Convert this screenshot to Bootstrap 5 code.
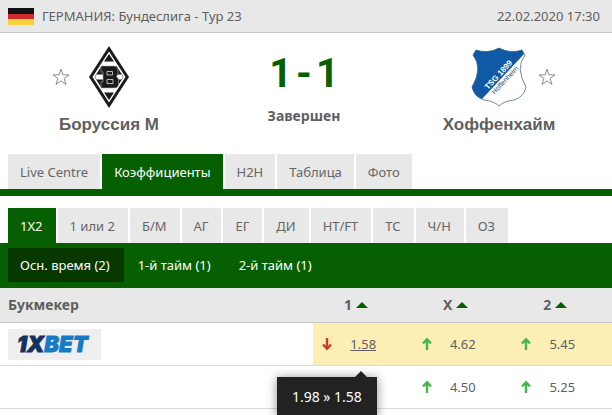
<!DOCTYPE html>
<html lang="ru">
<head>
<meta charset="utf-8">
<meta name="viewport" content="width=device-width, initial-scale=1">
<title>Боруссия М - Хоффенхайм</title>
<link rel="stylesheet" href="https://cdn.jsdelivr.net/npm/bootstrap@5.3.0/dist/css/bootstrap.min.css">
<style>
  :root { --green: #065f00; --grey: #e8e8e8; --ink: #5f5f5f; }
  body { font-family: "Noto Sans", Tahoma, sans-serif; font-size: 13px; line-height: 20px; color: var(--ink); background: #fff; min-height: 100vh; overflow: hidden; }
  .match-head { background: var(--grey); border-bottom: 1px solid #c8c8c8; padding: 6px 12px 6px 8px; }
  .scoreboard { padding: 12px 4px 0 0; height: 121px; }
  .score-box { width: 172px; }
  .score { font: bold 40px/52px Roboto, Arial, sans-serif; color: var(--green); gap: 4px; padding-top: 3px; }
  .status { padding-top: 6px; }
  .status, .odds th, .sort { font-size: 14px; font-weight: bold; }
  .crest-row { display: grid; grid-template-columns: 1fr 56px 1fr; column-gap: 11px; height: 64px; align-items: center; justify-items: center; }
  .star { grid-row: 1; border: 0; padding: 0; background: none; line-height: 0; }
  .star-left { grid-column: 1; justify-self: end; }
  .star-right { grid-column: 3; justify-self: start; }
  .crest { grid-row: 1; grid-column: 2; }
  .team-name { font: bold 17px/24px "Liberation Sans", Arial, sans-serif; margin: 4px 0 0; text-align: center; }
  .tabs { gap: 2px; padding-left: 8px; }
  .tabs button { border: 0; background: var(--grey); color: #666; height: 35px; padding: 0 12px; white-space: nowrap; }
  .bet-tabs button { padding-right: 13px; }
  .tabs button.active, .periods button { background: var(--green); color: #fff; }
  .main-tabs { border-bottom: 7px solid var(--green); margin-bottom: 12px; }
  .periods { background: var(--green); padding: 5px 8px 6px; gap: 2px; }
  .periods button { border: 0; height: 34px; padding: 0 14px 0 12px; }
  .periods button.active { background: #073800; }
  .odds { table-layout: fixed; width: 100%; border-collapse: separate; border-spacing: 0; }
  .odds th, .odds td { padding: 0; height: 43px; border: 0 solid #dcdcdc; border-bottom-width: 1px; }
  .odds thead th { height: 35px; background: var(--grey); border-color: #c8c8c8; }
  .odds th:first-child, .odds td:first-child { padding-left: 8px; }
  .maker-col { width: 51.2%; }
  .sort { border: 0; background: none; padding: 0 14px 0 0; color: inherit; gap: 4px; }
  .odds td.best { background: #fceeb4; }
  .odd { gap: 17px; padding-left: 8px; }
  .odd a { color: inherit; }
  .bookmaker { display: inline-block; vertical-align: middle; background: #efefef; line-height: 0; }
  .move-tip { position: absolute; z-index: 2; top: 54px; right: 36px; height: 40px; width: 100px; line-height: 40px; font-size: 14px; background: #222; color: #fff; text-align: center; box-shadow: 0 1px 10px rgba(0,0,0,.45); }
  .move-tip::before { content: ""; position: absolute; right: 10px; bottom: 100%; border: 6px solid transparent; border-top: 0; border-bottom-color: #222; }
</style>
</head>
<body>
<svg class="d-none" aria-hidden="true">
  <symbol id="star" viewBox="0 0 18 18"><path d="M9 1.2 10.9 6.9H17L12.1 10.5 14 16.4 9 12.8 4 16.4 5.9 10.5 1 6.9H7.1Z" fill="#fff" stroke="#8c8c8c"/></symbol>
  <symbol id="up" viewBox="0 0 10 14"><path d="M5 2V13M1 6.5 5 2.2 9 6.5" fill="none" stroke="#45b649" stroke-width="2.4"/></symbol>
  <symbol id="down" viewBox="0 0 10 14"><path d="M5 1V12M1 7.5 5 11.8 9 7.5" fill="none" stroke="#cf3a25" stroke-width="2.4"/></symbol>
  <symbol id="sort" viewBox="0 0 12 6"><path d="M0 6 6 0 12 6Z" fill="#065f00"/></symbol>
</svg>

<header class="match-head d-flex align-items-center">
  <svg width="26" height="17" class="me-2" role="img" aria-label="Германия"><path fill="#111" d="M0 0H26V6H0Z"/><path fill="#d22d2b" d="M0 6H26V11H0Z"/><path fill="#fbd03c" d="M0 11H26V17H0Z"/></svg>
  <span>ГЕРМАНИЯ: Бундеслига - Тур 23</span>
  <time class="ms-auto" datetime="2020-02-22T17:30">22.02.2020 17:30</time>
</header>

<main>
  <section class="scoreboard d-flex">
    <div class="flex-fill w-50">
      <div class="crest-row">
        <button class="star star-left" type="button" aria-label="В избранное: Боруссия М"><svg width="18" height="18"><use href="#star"/></svg></button>
        <svg class="crest" width="40" height="62" viewBox="0 0 40 62">
          <path d="M20 0 40 31 20 62 0 31Z" fill="#1b1b1b"/>
          <path d="M20 5.5 36.5 31 20 56.5 3.5 31Z" fill="#fff"/>
          <path d="M20 8 25 15.500H15ZM12.500 20H27.500L34.500 31 27.500 42H12.500L5.500 31ZM15 46.500H25L20 54Z" fill="#1b1b1b"/>
          <path d="M7.500 28.500H32.500L34 31 32.500 33.500H7.500L6 31Z" fill="#fff"/>
          <path d="M12 20H25Q29 20 29 24V28L27.500 30.500 29.500 33V38Q29.500 42 25 42H12V36H14V26H12Z" fill="#1b1b1b" stroke="#aaa" stroke-width=".6"/>
          <path d="M18 25.500H23.500V29H18ZM18 33.500H24V37.500H18Z" fill="#1b1b1b" stroke="#ddd" stroke-width=".8"/>
        </svg>
      </div>
      <h2 class="team-name">Боруссия М</h2>
    </div>
    <div class="score-box flex-shrink-0 text-center">
      <div class="score d-flex justify-content-center"><span>1</span><span>-</span><span>1</span></div>
      <div class="status">Завершен</div>
    </div>
    <div class="flex-fill w-50">
      <div class="crest-row">
        <svg class="crest" width="56" height="60" viewBox="0 0 56 60">
          <path d="M5 3Q17 7 28 1 39 7 51 3L54 8Q44 21 55 40 53 50 43 53 33 54 28 59 23 54 13 53 3 50 1 40 12 21 2 8Z" fill="#fff" stroke="#536b8c" stroke-width=".8"/>
          <path d="M5 3Q17 7 28 1 39 7 51 3L53 7 11 52Q3 49 1 40 12 21 2 8Z" fill="#0f59a5"/>
          <g transform="translate(17 43) rotate(-47)" font-family="Liberation Sans, Arial, sans-serif"><text font-size="8" font-weight="bold" fill="#fff">TSG 1899</text><text x="1" y="8" font-size="7" fill="#244d80">Hoffenheim</text></g>
        </svg>
        <button class="star star-right" type="button" aria-label="В избранное: Хоффенхайм"><svg width="18" height="18"><use href="#star"/></svg></button>
      </div>
      <h2 class="team-name">Хоффенхайм</h2>
    </div>
  </section>

  <nav class="tabs main-tabs d-flex" aria-label="Разделы матча">
    <button type="button">Live Centre</button><button type="button" class="active">Коэффициенты</button><button type="button">H2H</button><button type="button">Таблица</button><button type="button">Фото</button>
  </nav>
  <nav class="tabs bet-tabs d-flex" aria-label="Типы ставок">
    <button type="button" class="active">1X2</button><button type="button">1 или 2</button><button type="button">Б/М</button><button type="button">АГ</button><button type="button">ЕГ</button><button type="button">ДИ</button><button type="button">HT/FT</button><button type="button">ТС</button><button type="button">Ч/Н</button><button type="button">ОЗ</button>
  </nav>
  <nav class="periods d-flex" aria-label="Период">
    <button type="button" class="active">Осн. время (2)</button><button type="button">1-й тайм (1)</button><button type="button">2-й тайм (1)</button>
  </nav>

  <table class="odds">
    <colgroup><col class="maker-col"><col><col><col></colgroup>
    <thead>
      <tr>
        <th>Букмекер</th>
        <th><button class="sort d-flex align-items-center justify-content-center w-100" type="button">1<svg width="12" height="6"><use href="#sort"/></svg></button></th>
        <th><button class="sort d-flex align-items-center justify-content-center w-100" type="button">X<svg width="12" height="6"><use href="#sort"/></svg></button></th>
        <th><button class="sort d-flex align-items-center justify-content-center w-100" type="button">2<svg width="12" height="6"><use href="#sort"/></svg></button></th>
      </tr>
    </thead>
    <tbody>
      <tr>
        <td><a class="bookmaker" href="#" aria-label="1XBET"><svg width="93" height="31" font-family="Inter, sans-serif" font-weight="900" font-style="italic"><text x="9" y="23" font-size="22" fill="#12335f" stroke="#12335f" stroke-width=".8">1X<tspan fill="#167ac6" stroke="#167ac6">BET</tspan></text></svg></a></td>
        <td class="best position-relative">
          <div class="odd d-flex align-items-center"><svg width="12" height="14"><use href="#down"/></svg><a href="#" aria-describedby="move">1.58</a></div>
          <div class="move-tip" id="move" role="tooltip">1.98 » 1.58</div>
        </td>
        <td class="best"><div class="odd d-flex align-items-center"><svg width="12" height="14"><use href="#up"/></svg>4.62</div></td>
        <td class="best"><div class="odd d-flex align-items-center"><svg width="12" height="14"><use href="#up"/></svg>5.45</div></td>
      </tr>
      <tr>
        <td></td>
        <td></td>
        <td><div class="odd d-flex align-items-center"><svg width="12" height="14"><use href="#up"/></svg>4.50</div></td>
        <td><div class="odd d-flex align-items-center"><svg width="12" height="14"><use href="#up"/></svg>5.25</div></td>
      </tr>
    </tbody>
  </table>
</main>
<script src="https://cdn.jsdelivr.net/npm/bootstrap@5.3.0/dist/js/bootstrap.bundle.min.js"></script>
</body>
</html>
